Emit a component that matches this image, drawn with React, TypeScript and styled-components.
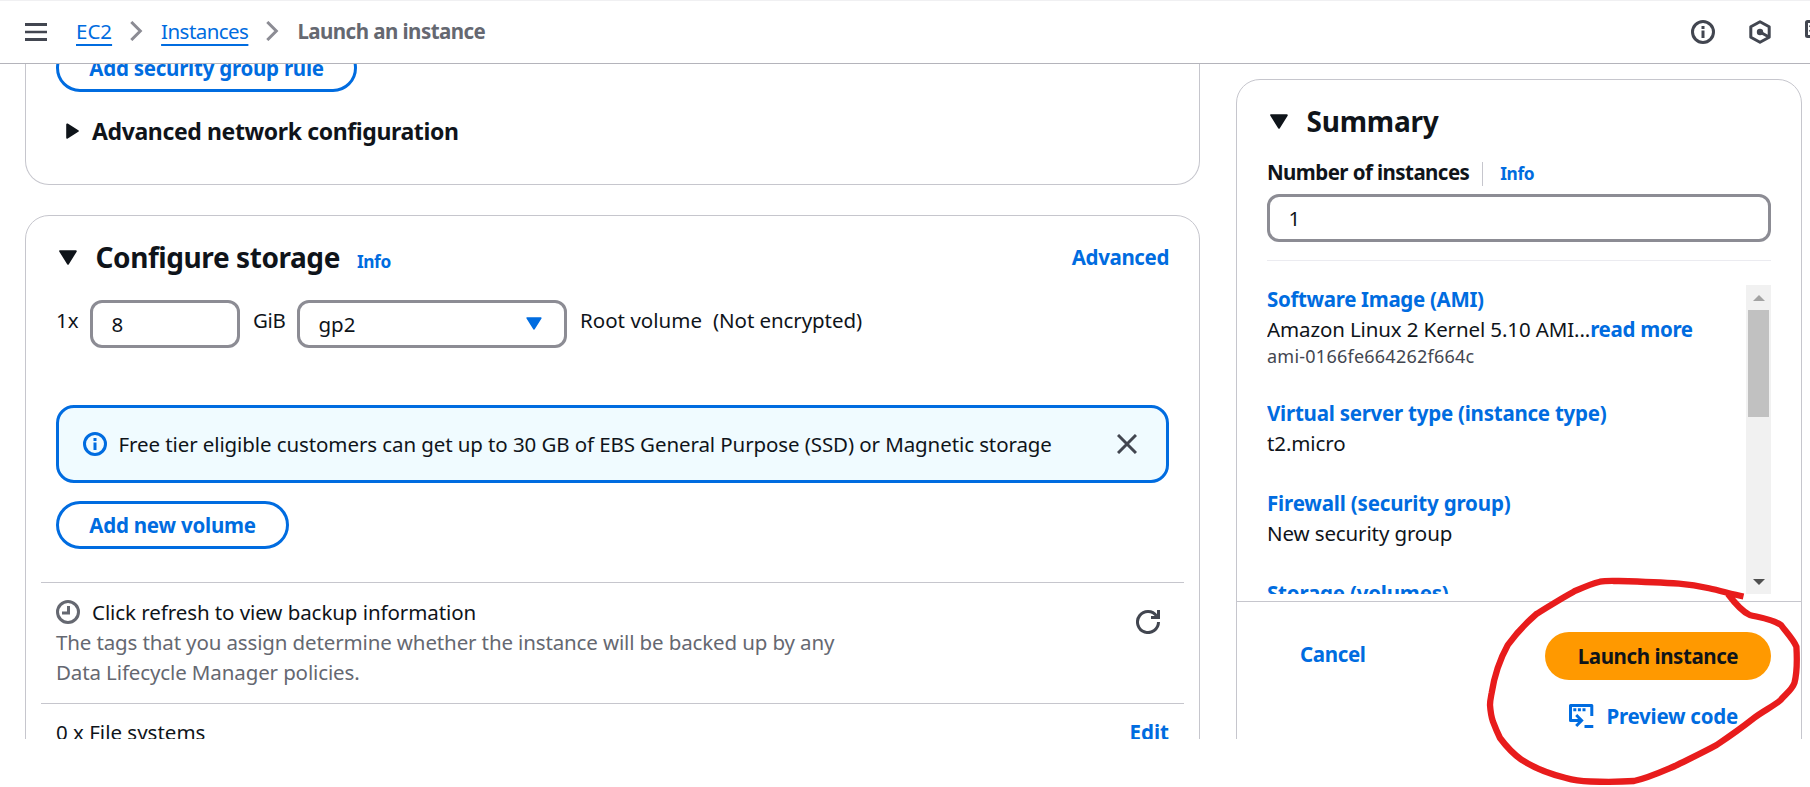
import React from "react";
import styled, { createGlobalStyle, css } from "styled-components";

const blue = "#006ce0";
const ink = "#0f141a";
const grey = "#656871";
const iconGrey = "#424650";
const line = "#c6c6cd";
const field = "#8c8c94";

const GlobalStyle = createGlobalStyle`
  *, *::before, *::after { box-sizing: border-box; }
  body {
    margin: 0;
    background: #fff;
    color: ${ink};
    font: 400 20.5px/30px "Noto Sans", "Open Sans", sans-serif;
    overflow: hidden;
  }
  svg { display: block; flex: none; }
`;

const Page = styled.div`
  position: relative;
  display: flex;
  flex-direction: column;
  width: 1810px;
  height: 787px;
  overflow: hidden;
  white-space: nowrap;
`;

const TopBar = styled.header`
  display: flex;
  align-items: center;
  flex: none;
  height: 64px;
  padding: 0 0 1px 25px;
  border-top: 1px solid #f0f0f2;
  border-bottom: 1px solid #b4b4bb;
  background: #fff;
`;

const Crumbs = styled.nav`
  display: flex;
  align-items: center;
  flex: 1;
  margin-left: 29px;
  padding-bottom: 1px;
`;

const CrumbLink = styled.a<{ $track?: number }>`
  color: ${blue};
  letter-spacing: ${(p) => p.$track ?? 0}px;
  text-decoration: underline;
  text-decoration-thickness: 2px;
  text-underline-offset: 5px;
  text-decoration-skip-ink: none;
`;

const CrumbCurrent = styled.span`
  color: ${grey};
  font-weight: 700;
  letter-spacing: -0.54px;
`;

const CrumbSeparator = styled.span`
  margin: 0 18px;
`;

const Tools = styled.div`
  display: flex;
  align-items: center;
  gap: 33px;
  margin-right: -17px;
`;

const Viewport = styled.div`
  display: flex;
  align-items: flex-start;
  gap: 36px;
  height: 675px;
  padding-left: 25px;
  overflow: hidden;
`;

const Column = styled.main`
  flex: none;
  width: 1175px;
`;

const panelFrame = css`
  border: 1px solid ${line};
  border-radius: 24px;
  padding: 0 30px;
  background: #fff;
`;

const NetworkPanel = styled.section`
  ${panelFrame}
  display: flow-root;
  height: 121px;
  margin-bottom: 30px;
  border-top: 0;
  border-radius: 0 0 24px 24px;
`;

const StoragePanel = styled.section`
  ${panelFrame}
  height: 640px;
  padding-top: 23px;
`;

const SummaryPanel = styled.aside`
  ${panelFrame}
  flex: none;
  width: 566px;
  height: 760px;
  margin-top: 15px;
  padding-top: 23px;
`;

const OutlineButton = styled.button<{ $width: number; $raised?: boolean; $track: number }>`
  display: flex;
  align-items: center;
  justify-content: center;
  width: ${(p) => p.$width}px;
  height: 48px;
  margin-top: ${(p) => (p.$raised ? -20 : 18)}px;
  padding: 0 0 1px;
  border: 3px solid ${blue};
  border-radius: 24px;
  background: #fff;
  color: ${blue};
  font: inherit;
  font-weight: 700;
  letter-spacing: ${(p) => p.$track}px;
`;

const Disclosure = styled.div`
  display: flex;
  align-items: center;
  gap: 13.5px;
  margin-top: 24px;
  padding-left: 9.5px;
  font-size: 23px;
  font-weight: 700;
  letter-spacing: -0.38px;
`;

const TitleRow = styled.div`
  display: flex;
  align-items: center;
  height: 36px;
`;

const TitleArrow = styled.span`
  padding-left: 3px;
`;

const Title = styled.h2<{ $track: number }>`
  margin: 0 0 0 18.5px;
  font-size: 28px;
  line-height: 36px;
  font-weight: 700;
  letter-spacing: ${(p) => p.$track}px;
`;

const InfoLink = styled.a<{ $drop?: boolean }>`
  margin-left: 17px;
  padding-top: ${(p) => (p.$drop ? 9 : 3)}px;
  color: ${blue};
  font-size: 17.3px;
  line-height: 28px;
  font-weight: 700;
  letter-spacing: -0.4px;
`;

const BoldLink = styled.a<{ $track?: number }>`
  color: ${blue};
  font-weight: 700;
  letter-spacing: ${(p) => p.$track ?? 0}px;
`;

const Spacer = styled.span`
  flex: 1;
`;

const VolumeRow = styled.div`
  display: flex;
  align-items: flex-start;
  height: 48px;
  margin-top: 25px;
`;

const VolumeLabel = styled.span<{ $width?: number; $track?: number }>`
  width: ${(p) => (p.$width ? `${p.$width}px` : "auto")};
  padding-top: 5px;
  letter-spacing: ${(p) => p.$track ?? 0}px;
`;

const VolumeGap = styled.span`
  width: 13px;
`;

const Field = styled.div<{ $width?: number }>`
  display: flex;
  align-items: center;
  justify-content: space-between;
  flex: none;
  width: ${(p) => (p.$width ? `${p.$width}px` : "100%")};
  height: 48px;
  padding: 0 22px 1px 18.5px;
  border: 3px solid ${field};
  border-radius: 12px;
  background: #fff;
`;

const Alert = styled.div`
  display: flex;
  align-items: center;
  height: 78px;
  margin-top: 57px;
  padding: 0 29px 1px 24px;
  border: 3px solid ${blue};
  border-radius: 18px;
  background: #f0fbff;
`;

const AlertText = styled.span`
  flex: 1;
  margin-left: 11.5px;
  letter-spacing: -0.095px;
`;

const Section = styled.div<{ $first?: boolean }>`
  display: flex;
  justify-content: space-between;
  margin: ${(p) => (p.$first ? "33px" : "0")} -15px 0;
  padding: ${(p) => (p.$first ? "14px 24px 16px 15px" : "13px 15px 0 15px")};
  border-top: 1px solid ${line};
`;

const BackupHeading = styled.div`
  display: flex;
  align-items: center;
  gap: 12px;
  letter-spacing: -0.07px;
`;

const BackupNote = styled.div<{ $track: number }>`
  color: ${grey};
  letter-spacing: ${(p) => p.$track}px;
`;

const RefreshSlot = styled.div`
  padding-top: 13px;
`;

const CountLabel = styled.div`
  display: flex;
  align-items: center;
  height: 30px;
  margin: 18px 0 7px;
`;

const CountName = styled.span`
  padding-right: 13px;
  font-weight: 700;
  letter-spacing: -0.57px;
`;

const CountDivider = styled.span`
  width: 1px;
  height: 24px;
  margin-top: 4px;
  background: ${line};
`;

const Rule = styled.hr`
  height: 1px;
  margin: 18px 0 24px;
  border: 0;
  background: #ebebf0;
`;

const ScrollArea = styled.div`
  display: flex;
  justify-content: space-between;
  height: 309px;
  overflow: hidden;
`;

const Details = styled.div`
  display: flex;
  flex-direction: column;
  gap: 30px;
  margin-top: -1px;
`;

const DetailValue = styled.div`
  letter-spacing: -0.12px;
`;

const DetailId = styled.div`
  color: ${iconGrey};
  font-size: 18px;
  line-height: 24px;
  letter-spacing: 0.24px;
`;

const ScrollTrack = styled.div`
  display: flex;
  flex-direction: column;
  align-items: center;
  width: 25px;
  background: #f1f1f1;
`;

const ScrollArrow = styled.div`
  display: flex;
  align-items: center;
  justify-content: center;
  height: 25px;
`;

const ScrollThumb = styled.div`
  width: 21px;
  height: 107px;
  margin-bottom: auto;
  background: #c1c1c1;
`;

const Footer = styled.footer`
  display: flex;
  justify-content: space-between;
  margin: 7px -30px 0;
  padding: 30px 30px 0 63px;
  border-top: 1px solid ${line};
`;

const CancelLink = styled(BoldLink)`
  padding-top: 7px;
`;

const Actions = styled.div`
  display: flex;
  flex-direction: column;
  align-items: flex-end;
  gap: 12px;
`;

const LaunchButton = styled.button`
  display: flex;
  align-items: center;
  justify-content: center;
  width: 226px;
  height: 48px;
  padding: 0 0 1px;
  border: 0;
  border-radius: 24px;
  background: #ff9900;
  color: ${ink};
  font: inherit;
  font-weight: 700;
  letter-spacing: -0.42px;
`;

const PreviewButton = styled.button`
  display: flex;
  align-items: center;
  gap: 12px;
  height: 48px;
  padding: 0 33px 1px 0;
  border: 0;
  background: none;
  color: ${blue};
  font: inherit;
  font-weight: 700;
  letter-spacing: -0.24px;
`;

const Marker = styled.svg`
  position: absolute;
  inset: 0;
  pointer-events: none;
`;

const MenuIcon = () => (
  <svg width="22" height="18" viewBox="0 0 22 18" fill={iconGrey}>
    <path d="M0 0H22V3H0zM0 7.7H22V10.3H0zM0 15H22V18H0z" />
  </svg>
);

const ChevronIcon = () => (
  <svg width="13" height="20" viewBox="0 0 13 20" fill="none" stroke={field} strokeWidth="3">
    <path d="M1.3 1L10.3 10L1.3 19" />
  </svg>
);

const InfoIcon = ({ color }: { color: string }) => (
  <svg width="24" height="24" viewBox="0 0 24 24" fill="none" stroke={color} strokeWidth="3">
    <circle cx="12" cy="12" r="10.5" />
    <path d="M12 6V9M12 10.6V18" />
  </svg>
);

const HexIcon = () => (
  <svg width="24" height="24" viewBox="0 0 24 24" fill="none" stroke={iconGrey} strokeWidth="3">
    <path d="M12 1.8L21.2 6.8V17.2L12 22.2L2.8 17.2V6.8Z" strokeLinejoin="round" />
    <path d="M12 12L20.5 16.8" />
    <circle cx="12" cy="12" r="3.2" fill={iconGrey} stroke="none" />
  </svg>
);

const ShellIcon = () => (
  <svg width="22" height="24" viewBox="0 0 22 24" fill="none" stroke={iconGrey} strokeWidth="3">
    <rect x="1.5" y="1.5" width="19" height="15" rx="1" />
    <path d="M4.5 5.5L8 8.5L4.5 11.5" strokeWidth="2" />
  </svg>
);

const DownTriangle = ({ width = 18, height = 15, color = ink }: { width?: number; height?: number; color?: string }) => (
  <svg width={width} height={height} viewBox="0 0 18 15" fill={color} stroke={color} strokeWidth="2" strokeLinejoin="round">
    <path d="M1.2 1.2H16.8L9 13.6Z" />
  </svg>
);

const RightTriangle = () => (
  <svg width="13" height="16" viewBox="0 0 13 16" fill={ink} stroke={ink} strokeWidth="2" strokeLinejoin="round">
    <path d="M1.2 1.4L11.8 8L1.2 14.6Z" />
  </svg>
);

const CloseIcon = () => (
  <svg width="20" height="20" viewBox="0 0 20 20" fill="none" stroke={iconGrey} strokeWidth="3">
    <path d="M1 1L19 19M19 1L1 19" />
  </svg>
);

const ClockIcon = () => (
  <svg width="24" height="24" viewBox="0 0 24 24" fill="none" stroke={grey} strokeWidth="3">
    <circle cx="12" cy="12" r="10.5" />
    <path d="M12.5 6V13H6" />
  </svg>
);

const RefreshIcon = () => (
  <svg width="24" height="24" viewBox="0 0 24 24" fill="none" stroke={iconGrey} strokeWidth="3">
    <path d="M22.5 12A10.5 10.5 0 1 1 20.6 6" />
    <path d="M22.5 0V7.5H15" />
  </svg>
);

const PreviewIcon = () => (
  <svg width="25" height="24" viewBox="0 0 25 24" fill="none" stroke={blue} strokeWidth="3">
    <path d="M22.8 12V1.5H1.5V16.5H12" strokeLinejoin="round" />
    <path d="M7.2 11L12.6 16.5L7.2 22M15.5 22.5H24.3" />
    <path d="M4.3 5.7H7.3M8.9 5.7H11.9M13.5 5.7H16.5" />
  </svg>
);

type Detail = { name: string; track: number; value?: string; more?: string; id?: string };

const details: Detail[] = [
  { name: "Software Image (AMI)", track: -0.33, value: "Amazon Linux 2 Kernel 5.10 AMI...", more: "read more", id: "ami-0166fe664262f664c" },
  { name: "Virtual server type (instance type)", track: -0.24, value: "t2.micro" },
  { name: "Firewall (security group)", track: -0.17, value: "New security group" },
  { name: "Storage (volumes)", track: -0.2 },
];

export default function App() {
  return (
    <Page>
      <GlobalStyle />
      <TopBar>
        <MenuIcon />
        <Crumbs>
          <CrumbLink>EC2</CrumbLink>
          <CrumbSeparator><ChevronIcon /></CrumbSeparator>
          <CrumbLink $track={-0.55}>Instances</CrumbLink>
          <CrumbSeparator><ChevronIcon /></CrumbSeparator>
          <CrumbCurrent>Launch an instance</CrumbCurrent>
        </Crumbs>
        <Tools>
          <InfoIcon color={iconGrey} />
          <HexIcon />
          <ShellIcon />
        </Tools>
      </TopBar>

      <Viewport>
        <Column>
          <NetworkPanel>
            <OutlineButton $width={301} $raised $track={-0.24}>Add security group rule</OutlineButton>
            <Disclosure><RightTriangle />Advanced network configuration</Disclosure>
          </NetworkPanel>

          <StoragePanel>
            <TitleRow>
              <TitleArrow><DownTriangle /></TitleArrow>
              <Title $track={-0.42}>Configure storage</Title>
              <InfoLink $drop>Info</InfoLink>
              <Spacer />
              <BoldLink $track={-0.37}>Advanced</BoldLink>
            </TitleRow>

            <VolumeRow>
              <VolumeLabel $width={34}>1x</VolumeLabel>
              <Field $width={150}>8</Field>
              <VolumeGap />
              <VolumeLabel $width={44} $track={-0.4}>GiB</VolumeLabel>
              <Field $width={270}>gp2<DownTriangle width={16} height={13} color={blue} /></Field>
              <VolumeGap />
              <VolumeLabel $width={133} $track={0.02}>Root volume</VolumeLabel>
              <VolumeLabel $track={-0.08}>(Not encrypted)</VolumeLabel>
            </VolumeRow>

            <Alert>
              <InfoIcon color={blue} />
              <AlertText>
                Free tier eligible customers can get up to 30 GB of EBS General Purpose (SSD) or Magnetic storage
              </AlertText>
              <CloseIcon />
            </Alert>
            <OutlineButton $width={233} $track={-0.22}>Add new volume</OutlineButton>

            <Section $first>
              <div>
                <BackupHeading><ClockIcon />Click refresh to view backup information</BackupHeading>
                <BackupNote $track={-0.13}>
                  The tags that you assign determine whether the instance will be backed up by any
                </BackupNote>
                <BackupNote $track={-0.12}>Data Lifecycle Manager policies.</BackupNote>
              </div>
              <RefreshSlot><RefreshIcon /></RefreshSlot>
            </Section>
            <Section>
              <span>0 x File systems</span>
              <BoldLink>Edit</BoldLink>
            </Section>
          </StoragePanel>
        </Column>

        <SummaryPanel>
          <TitleRow>
            <TitleArrow><DownTriangle /></TitleArrow>
            <Title $track={-0.2}>Summary</Title>
          </TitleRow>
          <CountLabel>
            <CountName>Number of instances</CountName>
            <CountDivider />
            <InfoLink>Info</InfoLink>
          </CountLabel>
          <Field>1</Field>
          <Rule />
          <ScrollArea>
            <Details>
              {details.map((d) => (
                <div key={d.name}>
                  <BoldLink $track={d.track}>{d.name}</BoldLink>
                  {d.value && (
                    <DetailValue>
                      {d.value}
                      {d.more && <BoldLink $track={-0.3}>{d.more}</BoldLink>}
                    </DetailValue>
                  )}
                  {d.id && <DetailId>{d.id}</DetailId>}
                </div>
              ))}
            </Details>
            <ScrollTrack>
              <ScrollArrow>
                <svg width="12" height="6" viewBox="0 0 12 6" fill="#a3a3a3"><path d="M0 6L6 0L12 6Z" /></svg>
              </ScrollArrow>
              <ScrollThumb />
              <ScrollArrow>
                <svg width="12" height="6" viewBox="0 0 12 6" fill="#505050"><path d="M0 0L6 6L12 0Z" /></svg>
              </ScrollArrow>
            </ScrollTrack>
          </ScrollArea>
          <Footer>
            <CancelLink $track={-0.35}>Cancel</CancelLink>
            <Actions>
              <LaunchButton>Launch instance</LaunchButton>
              <PreviewButton><PreviewIcon />Preview code</PreviewButton>
            </Actions>
          </Footer>
        </SummaryPanel>
      </Viewport>

      <Marker width="1810" height="787" viewBox="0 0 1810 787" fill="none" stroke="#e81c1c" strokeWidth="6.3" strokeLinejoin="round">
        <path d="M1743.5 596.5C1732 594 1721 591 1709 588.3C1699 586 1690 584.5 1679 583.6C1659 582.3 1638 581.6 1618.8 581C1610 581 1605 580.7 1600 581.7C1590 584 1583 587.5 1573.7 591.7C1560 599 1548 607 1536 614.3C1525 624 1515 635 1507.8 645C1500 659 1494 678 1491.6 693.3C1490.5 699 1490 701 1490 705C1490.5 712 1491 716 1493 721.7C1495 727 1497 732 1500 738C1506 746 1512 753 1521 759.3C1534 768 1550 774 1566 778C1574 780.5 1582 781.3 1590.6 781.5C1606 782 1620 782 1634 781C1648 778 1662 771.5 1675 766C1689 759 1704 752 1716.6 745C1730 736 1742 727.5 1754 718C1763 711 1774 706 1780.6 700C1785 694.5 1792 690 1794.5 682.7C1797 673 1797 657 1796.4 646.7C1793 639 1786 632 1781 625C1772 619 1760 617.5 1749.7 615C1741 611 1734 602 1728 594" />
      </Marker>
    </Page>
  );
}
